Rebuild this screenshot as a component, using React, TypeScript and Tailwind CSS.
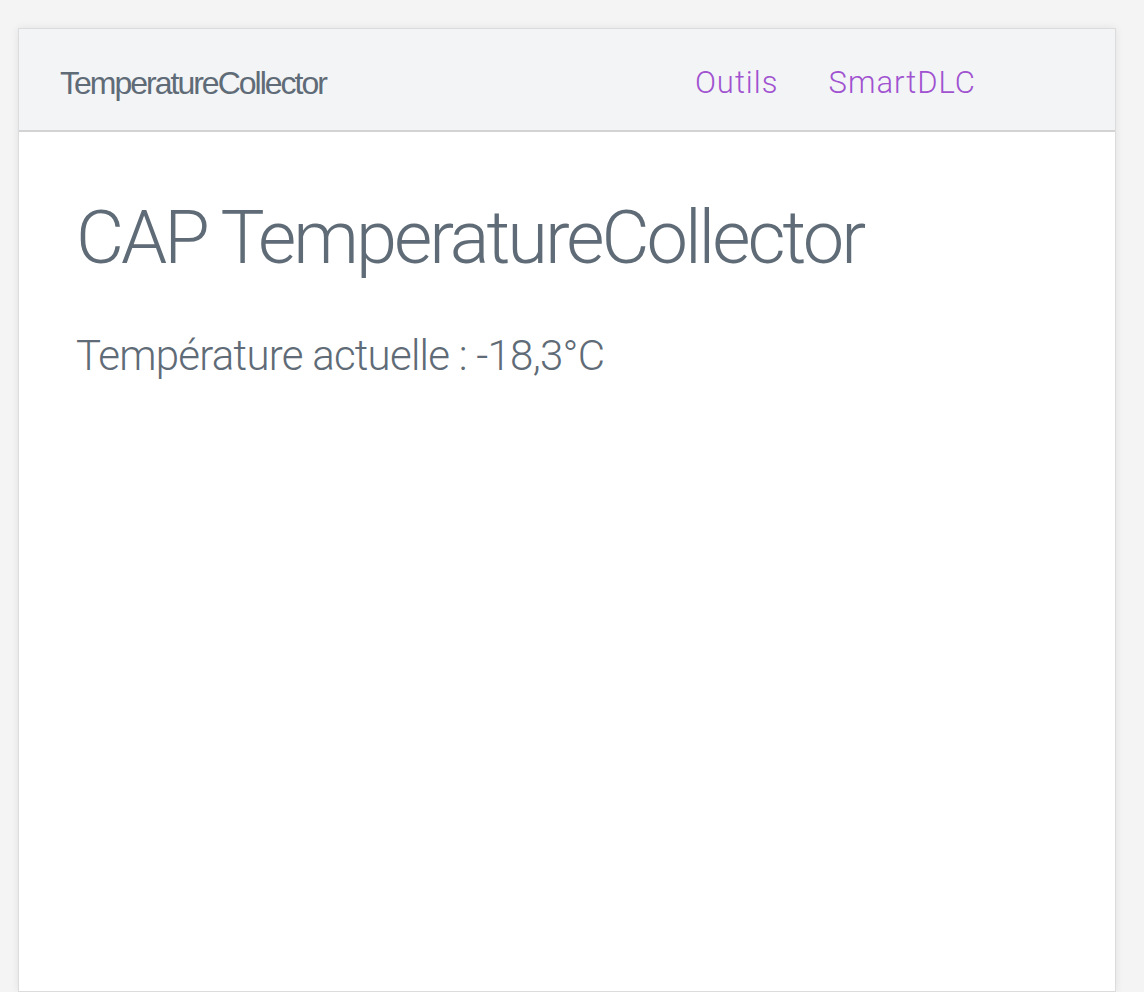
export default function App() {
  return (
    <div className="min-h-[992px] bg-[#f4f4f4] pt-[28px] pl-[18px] pr-[28px]">
      <div className="min-h-[964px] bg-white border border-[#dcdcdc] shadow-[0_0_8px_rgba(0,0,0,0.08)]">
        {/* Header */}
        <div className="h-[103px] bg-[#f3f4f6] border-b-2 border-[#d3d3d3] flex items-center pt-[7px] pl-[41px] pr-[139px]">
          <span
            className="text-[32px] text-[#5f6b76] tracking-[-2px]"
            style={{ fontFamily: '"Liberation Sans", Arial, sans-serif' }}
          >
            TemperatureCollector
          </span>
          <nav
            className="ml-auto flex gap-[50px] text-[31px] font-light text-[#a052d0] tracking-[1px]"
            style={{ fontFamily: 'Roboto, sans-serif' }}
          >
            <a>Outils</a>
            <a>SmartDLC</a>
          </nav>
        </div>

        {/* Content */}
        <div className="px-[57px] pt-[69px]" style={{ fontFamily: 'Roboto, sans-serif' }}>
          <h1 className="text-[74px] font-light text-[#5f6b76] leading-none tracking-[-3px]">
            CAP TemperatureCollector
          </h1>
          <p className="mt-[60px] text-[42px] font-light text-[#5f6b76] leading-none tracking-[-0.75px]">
            Température actuelle : -18,3°C
          </p>
        </div>
      </div>
    </div>
  )
}
